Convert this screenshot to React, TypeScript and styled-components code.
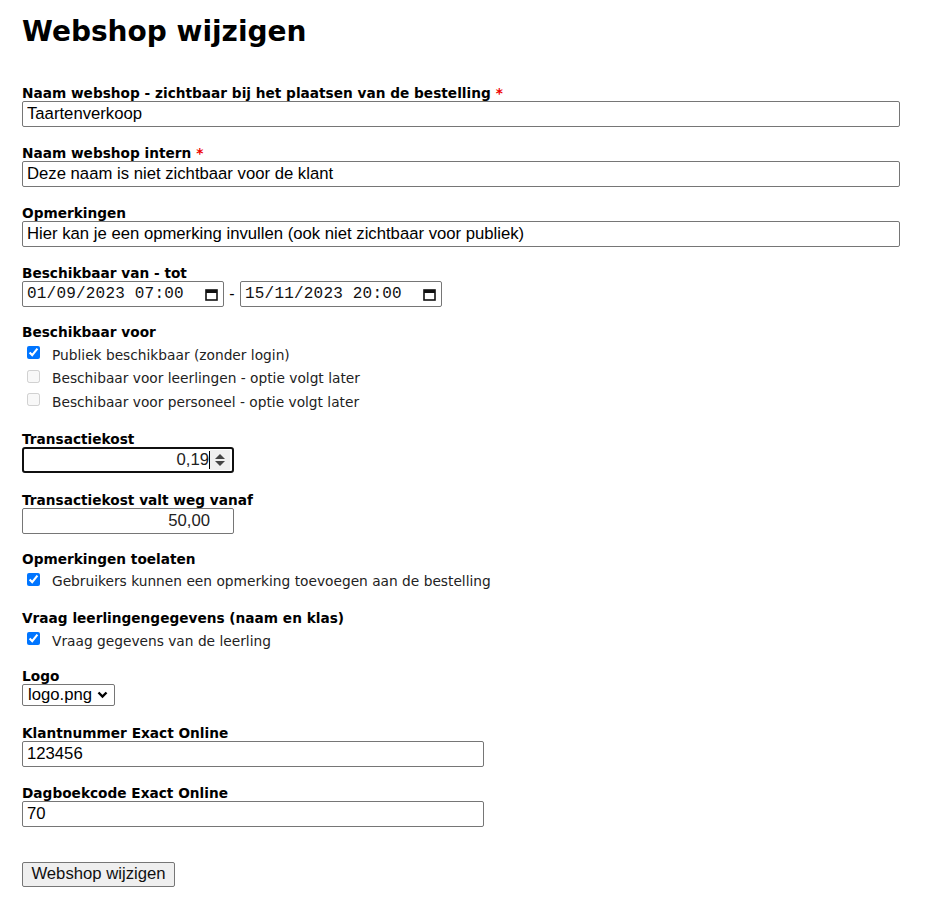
import React from "react";
import styled, { createGlobalStyle } from "styled-components";

const Global = createGlobalStyle`
  html, body { margin: 0; padding: 0; background: #fff; }
  body { font-family: "DejaVu Sans", Verdana, sans-serif; color: #000; }
`;

const Page = styled.main`
  padding: 14px 22px 40px 22px;
`;

const Title = styled.h1`
  font-family: "DejaVu Sans", Verdana, sans-serif;
  font-weight: bold;
  font-size: 28px;
  line-height: 36px;
  margin: 0 0 35px 0;
`;

const Form = styled.form`
  display: flex;
  flex-direction: column;
`;

const Field = styled.div<{ $gap?: number }>`
  display: flex;
  flex-direction: column;
  align-items: flex-start;
  margin-bottom: ${(p) => p.$gap ?? 18}px;
`;

const Label = styled.label`
  font-family: "DejaVu Sans", Verdana, sans-serif;
  font-weight: bold;
  font-size: 13.7px;
  line-height: 16px;
  color: #000;
`;

const Req = styled.span`
  color: #e00;
  margin-left: 5px;
`;

const TextInput = styled.input<{ $w: number }>`
  box-sizing: border-box;
  width: ${(p) => p.$w}px;
  height: 26px;
  margin: 0;
  padding: 1px 4px;
  border: 1px solid #767676;
  border-radius: 2px;
  font-family: "Liberation Sans", Arial, sans-serif;
  font-size: 16.7px;
  color: #000;
  background: #fff;
  outline: none;
`;

const DateRow = styled.div`
  display: flex;
  align-items: center;
  gap: 4px;
`;

const Dash = styled.span`
  font-family: "Liberation Sans", Arial, sans-serif;
  font-size: 16px;
  width: 8px;
  text-align: center;
`;

const DateBox = styled.div`
  box-sizing: border-box;
  width: 202px;
  height: 26px;
  border: 1px solid #767676;
  border-radius: 2px;
  display: flex;
  align-items: center;
  justify-content: space-between;
  padding: 0 5px 0 4px;
  font-family: "Liberation Mono", "DejaVu Sans Mono", monospace;
  font-size: 16px;
  letter-spacing: 0.2px;
  color: #111;
`;

const CheckList = styled.div`
  display: flex;
  flex-direction: column;
  padding-top: 3px;
`;

const CheckRow = styled.label`
  display: flex;
  align-items: center;
  height: 23.5px;
  font-family: "DejaVu Sans", Verdana, sans-serif;
  font-size: 13.75px;
  color: #222;
`;

const Check = styled.input`
  width: 13px;
  height: 13px;
  margin: 0 12px 4px 5px;
  accent-color: #0075ff;
`;

const SpinBox = styled.div`
  box-sizing: border-box;
  width: 212px;
  height: 26px;
  border: 2px solid #101010;
  border-radius: 3px;
  display: flex;
  align-items: center;
  padding: 0 2px 0 4px;
  font-family: "Liberation Sans", Arial, sans-serif;
  font-size: 16.7px;
  color: #222;
`;

const SpinValue = styled.span`
  flex: 1;
  text-align: right;
  border-right: 1px solid #000;
  line-height: 18px;
`;

const Spinner = styled.span`
  width: 20px;
  height: 20px;
  background: #efefef;
  display: flex;
  align-items: center;
  justify-content: center;
`;

const NumberBox = styled.div`
  box-sizing: border-box;
  width: 212px;
  height: 26px;
  border: 1px solid #767676;
  border-radius: 2px;
  display: flex;
  align-items: center;
  justify-content: flex-end;
  padding: 0 23px 0 4px;
  font-family: "Liberation Sans", Arial, sans-serif;
  font-size: 16.7px;
  color: #222;
`;

const SelectBox = styled.div`
  box-sizing: border-box;
  width: 93px;
  height: 22px;
  border: 1px solid #767676;
  border-radius: 2px;
  display: flex;
  align-items: center;
  justify-content: space-between;
  padding: 0 6px 0 5px;
  font-family: "Liberation Sans", Arial, sans-serif;
  font-size: 16.7px;
  color: #000;
`;

const Button = styled.button`
  box-sizing: border-box;
  width: 153px;
  height: 25px;
  margin-top: 17px;
  padding: 0;
  border: 1px solid #767676;
  border-radius: 2px;
  background: #efefef;
  font-family: "Liberation Sans", Arial, sans-serif;
  font-size: 16.7px;
  color: #111;
  align-self: flex-start;
`;

const CalendarIcon = () => (
  <svg width="13" height="13" viewBox="0 0 13 13">
    <rect x="1" y="2" width="11" height="10" fill="none" stroke="#111" strokeWidth="1.6" />
    <rect x="1" y="2" width="11" height="3" fill="#111" />
  </svg>
);

const SpinIcon = () => (
  <svg width="12" height="16" viewBox="0 0 12 16">
    <path d="M1 7 L6 2 L11 7 Z" fill="#444" />
    <path d="M1 9 L6 14 L11 9 Z" fill="#444" />
  </svg>
);

const Chevron = () => (
  <svg width="11" height="8" viewBox="0 0 11 8">
    <path d="M1.5 1.5 L5.5 5.5 L9.5 1.5" fill="none" stroke="#000" strokeWidth="2.4" />
  </svg>
);

export default function App() {
  return (
    <Page>
      <Global />
      <Title>Webshop wijzigen</Title>
      <Form onSubmit={(e) => e.preventDefault()}>
        <Field>
          <Label>
            Naam webshop - zichtbaar bij het plaatsen van de bestelling<Req>*</Req>
          </Label>
          <TextInput $w={878} defaultValue="Taartenverkoop" />
        </Field>
        <Field>
          <Label>
            Naam webshop intern<Req>*</Req>
          </Label>
          <TextInput $w={878} defaultValue="Deze naam is niet zichtbaar voor de klant" />
        </Field>
        <Field>
          <Label>Opmerkingen</Label>
          <TextInput
            $w={878}
            defaultValue="Hier kan je een opmerking invullen (ook niet zichtbaar voor publiek)"
          />
        </Field>
        <Field $gap={17}>
          <Label>Beschikbaar van - tot</Label>
          <DateRow>
            <DateBox>
              <span>01/09/2023 07:00</span>
              <CalendarIcon />
            </DateBox>
            <Dash>-</Dash>
            <DateBox>
              <span>15/11/2023 20:00</span>
              <CalendarIcon />
            </DateBox>
          </DateRow>
        </Field>
        <Field $gap={17}>
          <Label>Beschikbaar voor</Label>
          <CheckList>
            <CheckRow>
              <Check type="checkbox" defaultChecked />
              Publiek beschikbaar (zonder login)
            </CheckRow>
            <CheckRow>
              <Check type="checkbox" disabled />
              Beschibaar voor leerlingen - optie volgt later
            </CheckRow>
            <CheckRow>
              <Check type="checkbox" disabled />
              Beschibaar voor personeel - optie volgt later
            </CheckRow>
          </CheckList>
        </Field>
        <Field $gap={19}>
          <Label>Transactiekost</Label>
          <SpinBox>
            <SpinValue>0,19</SpinValue>
            <Spinner>
              <SpinIcon />
            </Spinner>
          </SpinBox>
        </Field>
        <Field $gap={17}>
          <Label>Transactiekost valt weg vanaf</Label>
          <NumberBox>50,00</NumberBox>
        </Field>
        <Field $gap={17}>
          <Label>Opmerkingen toelaten</Label>
          <CheckList>
            <CheckRow>
              <Check type="checkbox" defaultChecked />
              Gebruikers kunnen een opmerking toevoegen aan de bestelling
            </CheckRow>
          </CheckList>
        </Field>
        <Field $gap={15}>
          <Label>Vraag leerlingengegevens (naam en klas)</Label>
          <CheckList>
            <CheckRow>
              <Check type="checkbox" defaultChecked />
              Vraag gegevens van de leerling
            </CheckRow>
          </CheckList>
        </Field>
        <Field $gap={19}>
          <Label>Logo</Label>
          <SelectBox>
            <span>logo.png</span>
            <Chevron />
          </SelectBox>
        </Field>
        <Field>
          <Label>Klantnummer Exact Online</Label>
          <TextInput $w={462} defaultValue="123456" />
        </Field>
        <Field>
          <Label>Dagboekcode Exact Online</Label>
          <TextInput $w={462} defaultValue="70" />
        </Field>
        <Button type="submit">Webshop wijzigen</Button>
      </Form>
    </Page>
  );
}
